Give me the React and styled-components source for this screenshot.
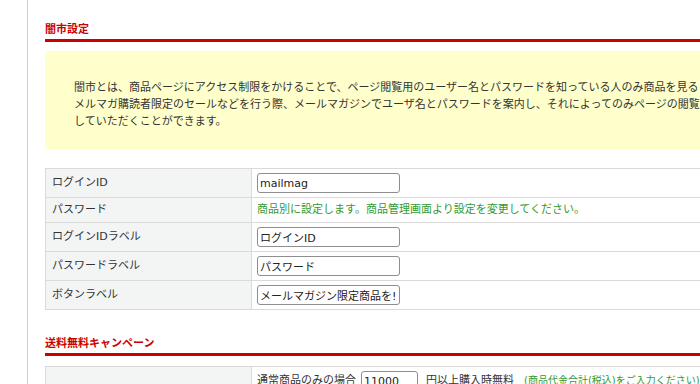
import React from "react";
import styled, { createGlobalStyle } from "styled-components";

const GlobalStyle = createGlobalStyle`
  html, body { margin: 0; padding: 0; background: #fff; }
  body {
    overflow: hidden;
    font-family: "DejaVu Sans", "Noto Sans CJK JP", sans-serif;
    font-size: 11px;
    color: #333;
  }
`;

const Page = styled.div`
  display: flex;
  min-height: 384px;
`;

const Main = styled.main`
  margin-left: 27px;
  border-left: 1px solid #cfcfcf;
  padding: 20px 0 0 17px;
  width: 1000px;
  flex-shrink: 0;
  min-height: 384px;
`;

const Section = styled.section`
  margin-top: ${(p) => p.$top || 0}px;
`;

const Heading = styled.h2`
  margin: 0;
  font-size: 11px;
  font-weight: bold;
  line-height: 16px;
  color: #cc0000;
  padding: 2px 0 1px;
  border-bottom: 3px solid #cc0000;
`;

const Notice = styled.div`
  margin-top: 9px;
  background: #ffffcc;
  padding: 28px 29px 19px;
  line-height: 17px;
  white-space: nowrap;
  overflow: hidden;
`;

const NoticeLine = styled.span`
  display: block;
`;

const Table = styled.table`
  margin-top: ${(p) => p.$top}px;
  width: 100%;
  border-collapse: collapse;
  border: 1px solid #dadada;
`;

const Label = styled.th`
  width: 193px;
  background: #f3f4f4;
  border: 1px solid #dadada;
  text-align: left;
  font-weight: normal;
  padding: 4px 6px;
  line-height: 16px;
  vertical-align: middle;
`;

const Value = styled.td`
  border: 1px solid #dadada;
  padding: 4px 5px;
  line-height: 16px;
  vertical-align: middle;
  color: ${(p) => (p.$note ? "#339933" : "#333")};
`;

const Input = styled.input`
  box-sizing: border-box;
  display: block;
  width: ${(p) => p.$w || 143}px;
  height: 20px;
  margin: 0;
  padding: 0 2px;
  border: 1px solid #8e8e8e;
  border-radius: 3px;
  font-family: "DejaVu Sans", "Noto Sans CJK JP", sans-serif;
  font-size: 11px;
  color: #222;
  background: #fff;
`;

const Inline = styled.div`
  display: flex;
  align-items: center;
  white-space: nowrap;
`;

const Gap = styled.span`
  margin-left: ${(p) => p.$l}px;
`;

const SmallNote = styled.span`
  margin-left: 10px;
  font-size: 10px;
  color: #339933;
`;

const rows = [
  { label: "ログインID", input: "mailmag" },
  { label: "パスワード", note: "商品別に設定します。商品管理画面より設定を変更してください。" },
  { label: "ログインIDラベル", input: "ログインID" },
  { label: "パスワードラベル", input: "パスワード" },
  { label: "ボタンラベル", input: "メールマガジン限定商品を!" },
];

export default function App() {
  return (
    <>
      <GlobalStyle />
      <Page>
        <Main>
          <Section>
            <Heading>闇市設定</Heading>
            <Notice>
              <NoticeLine>
                闇市とは、商品ページにアクセス制限をかけることで、ページ閲覧用のユーザー名とパスワードを知っている人のみ商品を見ることができるようにする機能です。
              </NoticeLine>
              <NoticeLine>
                メルマガ購読者限定のセールなどを行う際、メールマガジンでユーザ名とパスワードを案内し、それによってのみページの閲覧を許可するといった使い方を
              </NoticeLine>
              <NoticeLine>していただくことができます。</NoticeLine>
            </Notice>
            <Table $top={19}>
              <tbody>
                {rows.map((r) => (
                  <tr key={r.label}>
                    <Label>{r.label}</Label>
                    {r.note ? (
                      <Value $note>{r.note}</Value>
                    ) : (
                      <Value>
                        <Input defaultValue={r.input} />
                      </Value>
                    )}
                  </tr>
                ))}
              </tbody>
            </Table>
          </Section>
          <Section $top={24}>
            <Heading>送料無料キャンペーン</Heading>
            <Table $top={10}>
              <tbody>
                <tr>
                  <Label />
                  <Value>
                    <Inline>
                      通常商品のみの場合
                      <Gap $l={5}>
                        <Input $w={57} defaultValue="11000" />
                      </Gap>
                      <Gap $l={8}>円以上購入時無料</Gap>
                      <SmallNote>(商品代金合計(税込)をご入力ください)</SmallNote>
                    </Inline>
                  </Value>
                </tr>
              </tbody>
            </Table>
          </Section>
        </Main>
      </Page>
    </>
  );
}
